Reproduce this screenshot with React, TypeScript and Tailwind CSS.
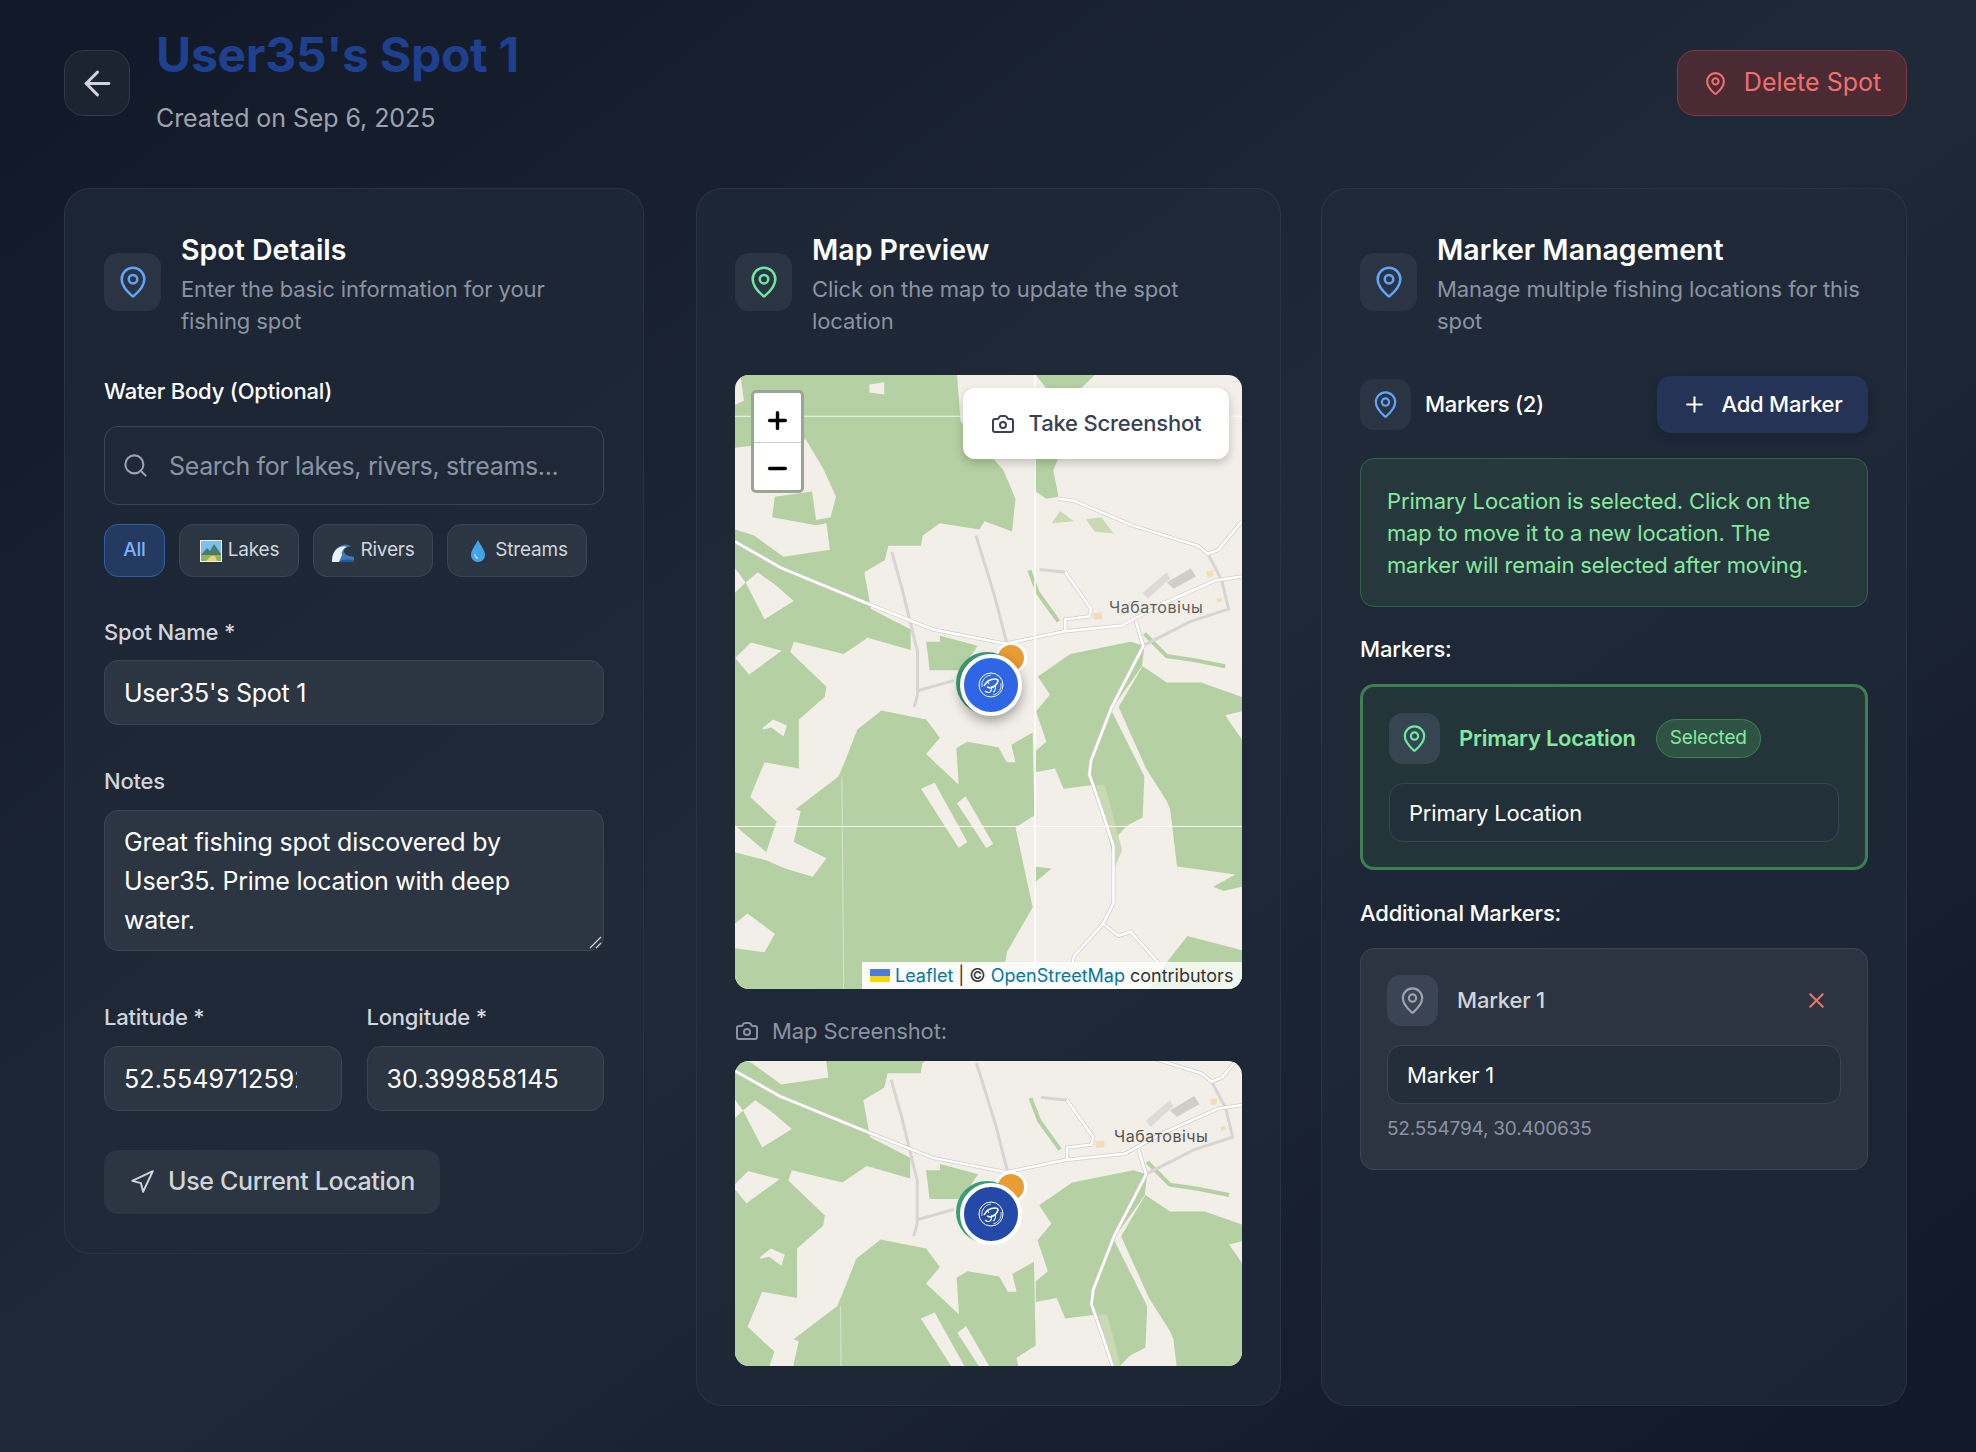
import { ArrowLeft, Camera, MapPin, Minus, Navigation, Plus, Search, X } from "lucide-react";

const forest = [
  "44,110 70,100 60,37 690,37 700,150 825,270 860,340 850,420 770,395 755,415 640,400 590,430 585,455 490,455 480,490 420,520 440,610 555,660 555,710 430,680 360,720 215,690 205,715 310,800 305,825 230,880 230,1000 130,985 88,1070 165,1130 135,1205 44,1140",
  "600,690 640,690 640,675 750,700 700,760 610,760 605,720",
  "925,775 1020,720 1195,690 1235,700 1228,750 1110,890 1075,1000 1090,1040 1000,1050 975,1000 915,1010 915,960 950,935 920,860 960,820",
  "1160,850 1230,750 1300,790 1400,790 1519,825 1519,860 1470,870 1519,930 1519,1290 1465,1300 1435,1290 1500,1260 1330,1240 1310,1100 1300,1080 1240,1000",
  "1095,900 1140,860 1235,1020 1230,1120 1185,1140 1140,1180 1085,1035 1075,1000",
  "400,905 470,858 600,880 640,925 600,965 695,1040 688,950 720,935 810,948 835,985 860,985 848,942 910,912 915,1115 860,1145 910,1340 835,1450 830,1475 415,1475 415,1540 44,1540 44,1440 130,1450 160,1405 80,1355 44,1380 44,1205 135,1225 190,1245 270,1265 310,1220 215,1180 235,1105 220,1100 345,1020 365,980",
  "1300,1475 1360,1410 1519,1445 1519,1540 1250,1540",
  "915,1240 965,1245 915,1280",
  "920,37 1090,37 1050,70 950,70",
  "915,240 985,240 970,270 985,335 950,340 915,320",
];

const clearings = [
  "44,215 250,195 300,265 338,335 322,385 280,392 268,322 160,335 152,385 280,405 310,400 320,465 185,482 100,430 44,415",
  "435,60 478,55 478,85 435,80",
  "75,545 110,520 160,550 215,590 130,635",
  "45,730 90,692 180,712 85,770",
  "44,510 75,545 44,570",
  "125,900 155,880 195,895 185,922 150,900 125,905",
  "585,1050 625,1035 720,1180 695,1195",
  "690,1085 715,1068 795,1185 775,1195",
];

const roads = [
  "44,445 180,510 440,600 620,660 830,695 1000,665 1170,650 1280,600 1440,540 1519,530",
  "1210,640 1232,700 1140,850 1080,980 1075,1015 1110,1100 1145,1190 1145,1330 1115,1380 1030,1460 1025,1480",
  "1115,1380 1160,1410 1195,1400 1280,1480",
  "985,340 1030,345 1200,405 1390,455 1420,475 1450,465 1519,395",
  "1005,520 1080,610 1075,628 1005,635 1005,665",
];

const tracks = [
  "500,470 530,560 575,715 575,820 565,850",
  "575,810 680,785",
  "745,430 800,580 835,695",
  "930,513 1005,520",
  "1420,475 1460,540 1480,610 1370,640 1230,700",
];

function MapDrawing({ viewBox, seams }: { viewBox: string; seams?: boolean }) {
  return (
    <svg className="absolute inset-0 h-full w-full" viewBox={viewBox} preserveAspectRatio="none">
      <rect x="0" y="0" width="1600" height="1600" fill="#f2efe9" />
      {forest.map((p) => (
        <polygon key={p} points={p} fill="#b5d0a2" />
      ))}
      {clearings.map((p) => (
        <polygon key={p} points={p} fill="#f2efe9" />
      ))}
      <polygon points="965,400 990,370 1030,395" fill="#c9d9b4" />
      <polygon points="1065,390 1110,385 1145,425 1090,420" fill="#c9d9b4" />
      <polygon points="1095,1040 1120,1040 1170,1200 1150,1240" fill="#c9d9b4" />
      <polygon points="1230,570 1300,520 1310,535 1245,585" fill="#dddbd7" />
      <polygon points="1300,545 1370,510 1385,530 1320,560" fill="#cfcecb" />
      <polygon points="1085,620 1112,618 1112,635 1088,636" fill="#f4dcb8" />
      <polygon points="1415,518 1435,515 1435,530 1418,532" fill="#f4dcb8" />
      <polygon points="1445,585 1460,582 1460,592 1447,594" fill="#f4dcb8" />
      <polyline points="900,515 925,570 985,640" fill="none" stroke="#b5d0a2" strokeWidth="4" vectorEffect="non-scaling-stroke" />
      <polyline points="1235,670 1300,725 1380,735 1470,750" fill="none" stroke="#b5d0a2" strokeWidth="4" vectorEffect="non-scaling-stroke" />
      {tracks.map((p) => (
        <polyline key={p} points={p} fill="none" stroke="#d6d5d2" strokeWidth="3" vectorEffect="non-scaling-stroke" />
      ))}
      {roads.map((p) => (
        <polyline key={p} points={p} fill="none" stroke="#d0cfca" strokeWidth="4" vectorEffect="non-scaling-stroke" />
      ))}
      {roads.map((p) => (
        <polyline key={p} points={p} fill="none" stroke="#ffffff" strokeWidth="2.5" vectorEffect="non-scaling-stroke" />
      ))}
      <line x1="355" y1="1020" x2="360" y2="1540" stroke="#ffffff" strokeOpacity="0.45" strokeWidth="1" vectorEffect="non-scaling-stroke" />
      {seams && (
        <>
          <line x1="917" y1="37" x2="917" y2="1540" stroke="#ffffff" strokeWidth="1.5" vectorEffect="non-scaling-stroke" />
          <line x1="44" y1="138" x2="1519" y2="138" stroke="#ffffff" strokeOpacity="0.8" strokeWidth="1" vectorEffect="non-scaling-stroke" />
          <line x1="44" y1="1142" x2="1519" y2="1142" stroke="#ffffff" strokeOpacity="0.9" strokeWidth="1" vectorEffect="non-scaling-stroke" />
        </>
      )}
    </svg>
  );
}

function FishMark() {
  return (
    <svg viewBox="0 0 26 26" className="h-[26px] w-[26px]" fill="none" stroke="#ffffff" strokeWidth="1">
      <circle cx="13" cy="13" r="12" />
      <path d="M13 3a10 10 0 0 0-9 12M23 11a10 10 0 0 1-8 12" strokeWidth="0.8" />
      <path d="M6 14c2-4 6-7 11-7 2 0 3 1 3 2-1 4-4 6-8 7l-3-1" strokeWidth="1.5" />
      <path d="M9 9l2 3M7 19c2 2 5 2 6 0l1-5M17 13c1 3 0 6-2 7" strokeWidth="1.2" />
    </svg>
  );
}

function SpotMarker({ fill, className, flat }: { fill: string; className: string; flat?: boolean }) {
  return (
    <div className={`absolute h-[70px] w-[72px] ${className}`}>
      <div className="absolute -top-[5px] left-[39px] h-[32px] w-[32px] rounded-full border-[3px] border-white bg-[#e89c33]" />
      <div className="absolute top-[5px] left-0 h-[62px] w-[62px] rounded-full bg-[#3a9d78]" />
      <div
        className={`absolute top-[7px] left-[4px] flex h-[62px] w-[62px] items-center justify-center rounded-full border-[4px] border-white ${flat ? "" : "shadow-[0_5px_12px_rgba(0,0,0,0.35)]"} ${fill}`}
      >
        <FishMark />
      </div>
    </div>
  );
}

function CardHeader({ title, text, green }: { title: string; text: string; green?: boolean }) {
  return (
    <div className="flex items-center gap-[20px]">
      <div className="flex h-[58px] w-[57px] shrink-0 items-center justify-center rounded-[14px] bg-[#2a3442]">
        <MapPin className={`h-[34px] w-[34px] ${green ? "text-[#6ee7a0]" : "text-[#60a5fa]"}`} strokeWidth={1.8} />
      </div>
      <div>
        <h2 className="text-[28.5px] leading-[46px] font-semibold tracking-normal text-white">{title}</h2>
        <p className="text-[22px] leading-[32px] tracking-[-0.1px] text-[#8b93a3]">{text}</p>
      </div>
    </div>
  );
}

function Label({ children, className }: { children: string; className?: string }) {
  return <div className={`text-[22px] leading-[32px] font-medium text-[#d1d5db] ${className ?? ""}`}>{children}</div>;
}

function FilledInput({ value, className }: { value: string; className?: string }) {
  return (
    <input
      readOnly
      value={value}
      className={`h-[65px] w-full rounded-[14px] border border-[#3a4554] bg-[#2c3542] pl-[19px] text-[25px] text-white outline-none ${className ?? ""}`}
    />
  );
}

function LakeEmoji() {
  return (
    <svg viewBox="0 0 24 24" className="h-[24px] w-[24px]">
      <rect x="1" y="1" width="22" height="22" fill="#f4f1e6" />
      <rect x="2" y="2" width="20" height="20" fill="#7cc0ee" />
      <path d="M2 16l6-7 3 3 4-7 7 10v3H2z" fill="#4a7a70" />
      <rect x="2" y="16" width="20" height="6" fill="#8fb55a" />
      <path d="M7 22l5-5h4l2 5z" fill="#e8d27c" />
    </svg>
  );
}

function WaveEmoji() {
  return (
    <svg viewBox="0 0 24 24" className="h-[24px] w-[24px]">
      <path d="M1 23c0-8 3-15 11-17 4-1 7 0 8 2-4-1-7 1-7 4 0 4 5 5 10 6v5z" fill="#3f78b8" />
      <path d="M1 23c0-8 3-13 8-15 3-1 5-1 7 0-3 1-6 4-5 8l-3 7z" fill="#e9f2f7" />
      <path d="M8 23c3-3 9-3 15-2v2z" fill="#1f5a9c" />
    </svg>
  );
}

function DropEmoji() {
  return (
    <svg viewBox="0 0 24 24" className="h-[24px] w-[24px]">
      <path d="M12 1c3 6 7 10 7 15a7 7 0 0 1-14 0c0-5 4-9 7-15z" fill="#42a5ea" />
      <path d="M9 15c0 2 1 4 3 4" fill="none" stroke="#b5e0fa" strokeWidth="1.5" />
    </svg>
  );
}

export default function App() {
  return (
    <div className="min-h-screen bg-gradient-to-br from-[#111827] via-[#1f2937] to-[#111827] pt-[22px] pr-[69px] pb-[47px] pl-[64px] font-['Inter',sans-serif] tracking-[-0.2px]">
      {/* Header */}
      <div className="flex items-start justify-between">
        <div className="flex items-start gap-[26px]">
          <button
            type="button"
            className="mt-[28px] flex h-[66px] w-[66px] items-center justify-center rounded-[20px] border border-[#2f3947] bg-[#1c2432]"
          >
            <ArrowLeft className="h-[39px] w-[39px] text-[#d1d5db]" strokeWidth={1.8} />
          </button>
          <div>
            <h1 className="text-[48px] leading-[66px] font-bold tracking-[-0.25px] text-[#1e408f]">User35's Spot 1</h1>
            <p className="mt-[14px] text-[25px] leading-[32px] tracking-[-0.08px] text-[#9ca3af]">Created on Sep 6, 2025</p>
          </div>
        </div>
        <button
          type="button"
          className="mt-[28px] flex h-[66px] w-[230px] items-center justify-center gap-[16px] rounded-[18px] border border-[#7f3a3f] bg-[#4a2a33] text-[25px] tracking-normal text-[#f0706e]"
        >
          <MapPin className="h-[25px] w-[25px]" />
          Delete Spot
        </button>
      </div>

      <div className="mt-[54px] flex items-stretch">
        {/* Spot details */}
        <section className="mr-[52px] w-[580px] self-start rounded-[26px] border border-[#2f3a48]/70 bg-[#1f2937]/70 px-[39px] pt-[38px] pb-[39px]">
          <CardHeader title="Spot Details" text="Enter the basic information for your fishing spot" />

          <div className="mt-[38px] text-[22px] leading-[32px] font-medium text-white">Water Body (Optional)</div>
          <div className="relative mt-[19px]">
            <Search className="absolute top-[26px] left-[18px] h-[27px] w-[27px] text-[#9ca3af]" strokeWidth={1.8} />
            <input
              placeholder="Search for lakes, rivers, streams..."
              className="h-[79px] w-full rounded-[14px] border border-[#3a4554] bg-[#1e2836] pr-[19px] pl-[64px] text-[25px] tracking-[-0.35px] text-white outline-none placeholder:text-[#8b93a3]"
            />
          </div>
          <div className="mt-[19px] flex gap-[14px]">
            <button type="button" className="h-[53px] w-[61px] rounded-[14px] border border-[#2f5ea8] bg-[#243a60] text-[19px] font-medium text-[#7db4f8]">
              All
            </button>
            <button type="button" className="flex h-[53px] w-[120px] items-center justify-center gap-[5px] rounded-[14px] border border-[#3a4554] bg-[#2c3542] text-[19px] text-[#d1d5db]">
              <LakeEmoji />
              Lakes
            </button>
            <button type="button" className="flex h-[53px] w-[120px] items-center justify-center gap-[5px] rounded-[14px] border border-[#3a4554] bg-[#2c3542] text-[19px] text-[#d1d5db]">
              <WaveEmoji />
              Rivers
            </button>
            <button type="button" className="flex h-[53px] w-[140px] items-center justify-center gap-[5px] rounded-[14px] border border-[#3a4554] bg-[#2c3542] text-[19px] text-[#d1d5db]">
              <DropEmoji />
              Streams
            </button>
          </div>

          <Label className="mt-[39px]">Spot Name *</Label>
          <FilledInput value="User35's Spot 1" className="mt-[12px] pr-[19px] tracking-[-0.25px]" />

          <Label className="mt-[40px]">Notes</Label>
          <div className="relative mt-[13px]">
            <textarea
              readOnly
              value="Great fishing spot discovered by User35. Prime location with deep water."
              className="block h-[141px] w-full resize-none rounded-[14px] border border-[#3a4554] bg-[#2c3542] px-[19px] pt-[12px] text-[25px] leading-[39px] text-white outline-none"
            />
            <svg viewBox="0 0 14 14" className="pointer-events-none absolute right-[2px] bottom-[2px] h-[14px] w-[14px]" fill="none" stroke="#d1d5db" strokeWidth="1.2">
              <path d="M2 13L13 2M8 13l5-5" />
            </svg>
          </div>

          <div className="mt-[50px] grid grid-cols-2 gap-[25px]">
            <div>
              <Label>Latitude *</Label>
              <FilledInput value="52.554971259285" className="mt-[13px] pr-[44px] tracking-[0.1px]" />
            </div>
            <div>
              <Label>Longitude *</Label>
              <FilledInput value="30.399858145" className="mt-[13px] pr-[44px] tracking-[0.1px]" />
            </div>
          </div>

          <button
            type="button"
            className="mt-[39px] flex h-[64px] w-[336px] items-center justify-center gap-[13px] rounded-[14px] bg-[#2c3542] text-[25px] font-medium tracking-[-0.35px] text-[#d1d5db]"
          >
            <Navigation className="h-[26px] w-[26px]" strokeWidth={1.8} />
            Use Current Location
          </button>
        </section>

        {/* Map preview */}
        <section className="mr-[40px] w-[585px] rounded-[26px] border border-[#2f3a48]/70 bg-[#1f2937]/70 px-[38px] pt-[38px] pb-[39px]">
          <CardHeader green title="Map Preview" text="Click on the map to update the spot location" />

          <div className="relative mt-[38px] h-[614px] overflow-hidden rounded-[14px]">
            <MapDrawing seams viewBox="44 37 1475 1503" />
            <span className="absolute top-[222px] left-[374px] text-[16px] leading-[20px] tracking-[0.5px] text-[#625f5b]">Чабатовічы</span>
            <SpotMarker fill="bg-[#2f66e6]" className="top-[272px] left-[221px]" />

            <div className="absolute top-[15px] left-[16px] flex h-[103px] w-[53px] flex-col rounded-[5px] border-[3px] border-[#9aa596] bg-white">
              <div className="flex flex-1 items-center justify-center border-b border-[#cccccc] pt-[5px]">
                <Plus className="h-[27px] w-[27px] text-black" strokeWidth={3} />
              </div>
              <div className="flex flex-1 items-center justify-center pt-[3px]">
                <Minus className="h-[27px] w-[27px] text-black" strokeWidth={3} />
              </div>
            </div>

            <button
              type="button"
              className="absolute top-[13px] right-[13px] flex h-[71px] w-[266px] items-center justify-center gap-[14px] rounded-[12px] bg-white text-[22px] font-medium text-[#374151] shadow-[0_4px_10px_rgba(0,0,0,0.2)]"
            >
              <Camera className="h-[24px] w-[24px]" />
              Take Screenshot
            </button>

            <div className="absolute right-0 bottom-0 flex h-[27px] w-[380px] items-center gap-[5px] bg-white/80 pl-[8px] text-[18px] leading-[27px] tracking-normal text-[#333333]">
              <span className="flex h-[13px] w-[20px] shrink-0 flex-col">
                <span className="h-1/2 bg-[#4c7be1]" />
                <span className="h-1/2 bg-[#ffd500]" />
              </span>
              <span className="text-[#0078a8]">Leaflet</span>
              <span>|</span>
              <span>©</span>
              <span className="text-[#0078a8]">OpenStreetMap</span>
              <span>contributors</span>
            </div>
          </div>

          <div className="mt-[26px] flex h-[32px] items-center gap-[13px] text-[22px] tracking-[-0.1px] text-[#8b93a3]">
            <Camera className="h-[24px] w-[24px]" />
            Map Screenshot:
          </div>
          <div className="relative mt-[14px] h-[305px] overflow-hidden rounded-[14px]">
            <MapDrawing viewBox="52 425 1455 740" />
            <span className="absolute top-[65px] left-[379px] text-[16px] leading-[20px] tracking-[0.5px] text-[#55534f]">Чабатовічы</span>
            <SpotMarker flat fill="bg-[#2449a8]" className="top-[115px] left-[221px]" />
          </div>
        </section>

        {/* Marker management */}
        <section className="w-[586px] rounded-[26px] border border-[#2f3a48]/70 bg-[#1f2937]/70 px-[38px] pt-[38px] pb-[39px]">
          <CardHeader title="Marker Management" text="Manage multiple fishing locations for this spot" />

          <div className="mt-[39px] flex items-center justify-between">
            <div className="flex items-center gap-[14px]">
              <div className="flex h-[51px] w-[51px] items-center justify-center rounded-[14px] bg-[#2a3442]">
                <MapPin className="h-[29px] w-[29px] text-[#60a5fa]" strokeWidth={1.8} />
              </div>
              <span className="text-[22px] font-medium tracking-[-0.3px] text-white">Markers (2)</span>
            </div>
            <button
              type="button"
              className="flex h-[57px] w-[211px] items-center justify-center gap-[14px] rounded-[14px] bg-[#243356] text-[22px] font-medium text-white shadow-[0_4px_10px_rgba(0,0,0,0.15)]"
            >
              <Plus className="h-[25px] w-[25px]" />
              Add Marker
            </button>
          </div>

          <div className="mt-[25px] h-[149px] rounded-[14px] border border-[#35624a] bg-[#26383c] px-[26px] pt-[26px] text-[22px] leading-[32px] tracking-[-0.15px] text-[#86e8a0]">
            Primary Location is selected. Click on the map to move it to a new location. The marker will remain selected after moving.
          </div>

          <div className="mt-[26px] text-[22px] leading-[32px] font-medium text-white">Markers:</div>
          <div className="mt-[19px] h-[186px] rounded-[14px] border-[3px] border-[#3f7f52] bg-[#24353a] px-[26px] pt-[26px]">
            <div className="flex items-center">
              <div className="flex h-[51px] w-[51px] items-center justify-center rounded-[14px] bg-[#374550]">
                <MapPin className="h-[29px] w-[29px] text-[#6ee7a0]" strokeWidth={1.8} />
              </div>
              <span className="ml-[19px] text-[22px] font-semibold tracking-[-0.25px] text-[#86e8a0]">Primary Location</span>
              <span className="ml-[20px] flex h-[39px] w-[105px] items-center justify-center rounded-full border border-[#3f7f52] bg-[#2f5343] text-[19px] text-[#86e8a0]">
                Selected
              </span>
            </div>
            <input
              readOnly
              value="Primary Location"
              className="mt-[19px] h-[59px] w-full rounded-[14px] border border-[#364552] bg-[#22303a] px-[19px] text-[22px] text-white outline-none"
            />
          </div>

          <div className="mt-[27px] text-[22px] leading-[32px] font-medium text-white">Additional Markers:</div>
          <div className="mt-[19px] h-[222px] rounded-[14px] border border-[#3a4554] bg-[#2c3442] px-[26px] pt-[26px]">
            <div className="flex items-center">
              <div className="flex h-[51px] w-[51px] items-center justify-center rounded-[14px] bg-[#3b4452]">
                <MapPin className="h-[29px] w-[29px] text-[#9ca3af]" strokeWidth={1.8} />
              </div>
              <span className="ml-[19px] text-[22px] font-medium text-[#d1d5db]">Marker 1</span>
              <X className="mr-[12px] ml-auto h-[25px] w-[25px] text-[#f0706e]" />
            </div>
            <input
              readOnly
              value="Marker 1"
              className="mt-[19px] h-[59px] w-full rounded-[14px] border border-[#3a4554] bg-[#242e3b] px-[19px] text-[22px] text-white outline-none"
            />
            <div className="mt-[10px] text-[19px] leading-[30px] text-[#8b93a3]">52.554794, 30.400635</div>
          </div>
        </section>
      </div>
    </div>
  );
}
